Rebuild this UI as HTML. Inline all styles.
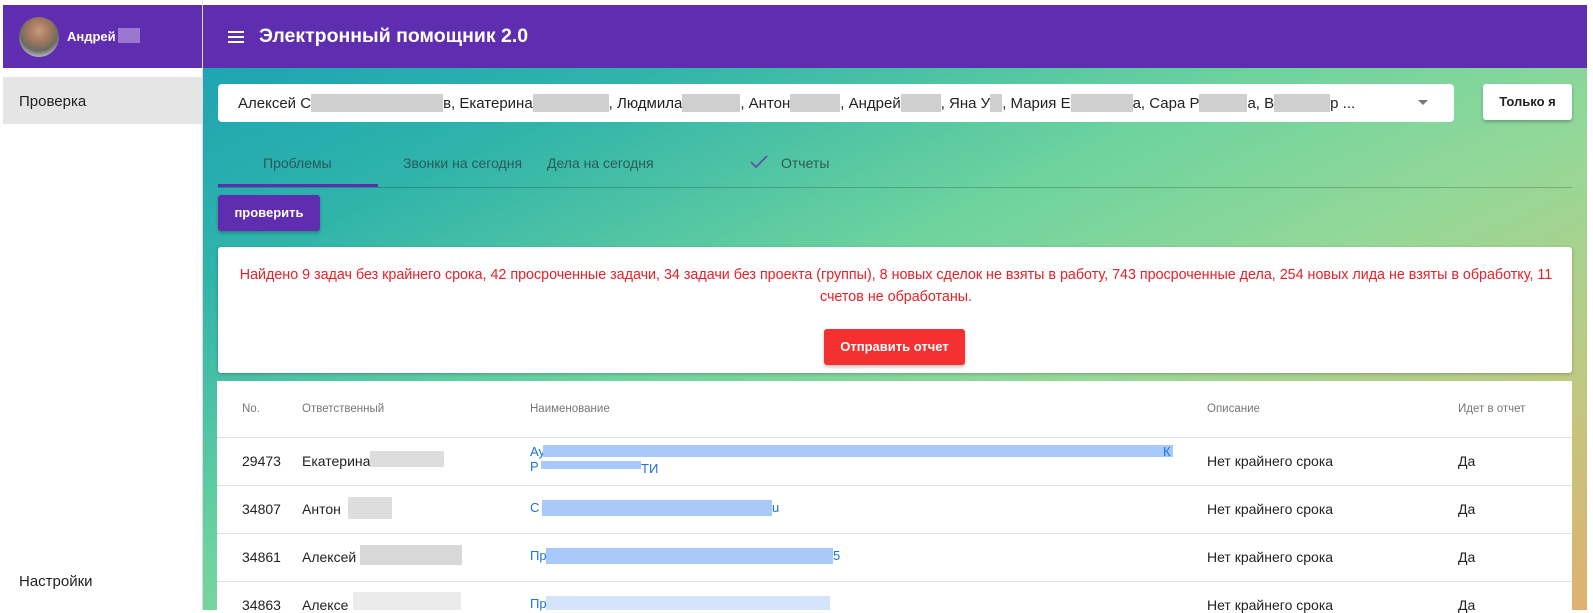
<!DOCTYPE html>
<html><head><meta charset="utf-8"><style>
*{box-sizing:border-box;margin:0;padding:0}
body{width:1593px;height:610px;background:#fff;position:relative;overflow:hidden;font-family:"Liberation Sans","DejaVu Sans",sans-serif;color:#222}
.abs{position:absolute}
.blur{position:absolute;background:#cfcfcf}
.bblur{position:absolute;background:#a9c9fb}
.ib{display:inline-block;height:18px;background:#cfcfcf;vertical-align:-4px}
</style></head><body>
<!-- sidebar -->
<div class="abs" style="left:3px;top:5px;width:199px;height:63px;background:#5e2db0"></div>
<div class="abs" style="left:19px;top:17px;width:40px;height:40px;border-radius:50%;background:radial-gradient(circle at 50% 35%,#c99a80 0,#a87a60 30%,#6b6a60 60%,#b9b8c8 80%)"></div>
<div class="abs" style="left:67px;top:29px;color:#fff;font-weight:bold;font-size:13px">Андрей</div>
<div class="abs" style="left:118px;top:28px;width:22px;height:15px;background:#9a78d0"></div>
<div class="abs" style="left:202px;top:0;width:1px;height:610px;background:#ddd"></div>
<div class="abs" style="left:3px;top:77px;width:199px;height:47px;background:#e5e5e5"></div>
<div class="abs" style="left:19px;top:93px;font-size:15px;color:#222">Проверка</div>
<div class="abs" style="left:19px;top:573px;font-size:15px;color:#222">Настройки</div>
<!-- main -->
<div class="abs" style="left:203px;top:5px;width:1384px;height:605px;background:linear-gradient(155deg,#1a9fb6 0%,#30b4aa 22%,#6ed39e 45%,#94d898 62%,#c0c880 82%,#e0b070 100%)"></div>
<div class="abs" style="left:203px;top:5px;width:1384px;height:63px;background:#5e2db0"></div>
<div class="abs" style="left:228px;top:31px;width:16px;height:2px;background:#fff;box-shadow:0 5px 0 #fff,0 10px 0 #fff"></div>
<div class="abs" style="left:259px;top:25px;color:#fff;font-weight:bold;font-size:19.5px">Электронный помощник 2.0</div>
<!-- select -->
<div class="abs" style="left:218px;top:84px;width:1236px;height:38px;background:#fff;border-radius:4px"></div>
<div class="abs" style="left:238px;top:94px;font-size:15px;white-space:nowrap">Алексей С<span class="ib" style="width:132px"></span>в, Екатерина<span class="ib" style="width:76px"></span>, Людмила<span class="ib" style="width:58px"></span>, Антон<span class="ib" style="width:50px"></span>, Андрей<span class="ib" style="width:40px"></span>, Яна У<span class="ib" style="width:12px"></span>, Мария Е<span class="ib" style="width:62px"></span>а, Сара Р<span class="ib" style="width:48px"></span>а, В<span class="ib" style="width:56px"></span>р ...</div>
<div class="abs" style="left:1418px;top:100px;border-left:5px solid transparent;border-right:5px solid transparent;border-top:5px solid #777"></div>
<div class="abs" style="left:1483px;top:84px;width:89px;height:36px;background:#fff;border-radius:3px;box-shadow:0 2px 3px rgba(0,0,0,.25);font-size:13px;font-weight:bold;text-align:center;line-height:36px">Только я</div>
<!-- tabs -->
<div class="abs" style="left:218px;top:187px;width:1354px;height:1px;background:rgba(0,0,0,.2)"></div>
<div class="abs" style="left:218px;top:184px;width:160px;height:3px;background:#5e2db0"></div>
<div class="abs" style="left:263px;top:155px;font-size:14px;color:#2a5a5a">Проблемы</div>
<div class="abs" style="left:403px;top:155px;font-size:14px;color:#2a5a5a">Звонки на сегодня</div>
<div class="abs" style="left:547px;top:155px;font-size:14px;color:#2a5a5a">Дела на сегодня</div>
<svg class="abs" style="left:749px;top:154px" width="20" height="16" viewBox="0 0 20 16"><path d="M2 8 L7 13 L18 2" fill="none" stroke="#5a55a8" stroke-width="1.8"/></svg>
<div class="abs" style="left:781px;top:155px;font-size:14px;color:#2a5a5a">Отчеты</div>
<div class="abs" style="left:218px;top:195px;width:102px;height:36px;background:#5e2db0;border-radius:3px;box-shadow:0 2px 3px rgba(0,0,0,.25);color:#fff;font-weight:bold;font-size:13px;text-align:center;line-height:36px">проверить</div>
<!-- problem card -->
<div class="abs" style="left:218px;top:247px;width:1354px;height:126px;background:#fff;border-radius:3px;box-shadow:0 1px 3px rgba(0,0,0,.25)"></div>
<div class="abs" style="left:236px;top:264px;width:1320px;text-align:center;font-size:14.3px;line-height:22px;color:#e8202a">Найдено 9 задач без крайнего срока, 42 просроченные задачи, 34 задачи без проекта (группы), 8 новых сделок не взяты в работу, 743 просроченные дела, 254 новых лида не взяты в обработку, 11 счетов не обработаны.</div>
<div class="abs" style="left:824px;top:329px;width:141px;height:36px;background:#f53030;border-radius:3px;box-shadow:0 2px 3px rgba(0,0,0,.25);color:#fff;font-weight:bold;font-size:13px;text-align:center;line-height:36px">Отправить отчет</div>
<!-- table -->
<div class="abs" style="left:217px;top:381px;width:1355px;height:229px;background:#fff"></div>
<div class="abs" style="top:403px;left:242px;font-size:11.5px;color:#777">No.</div>
<div class="abs" style="top:403px;left:302px;font-size:11.5px;color:#777">Ответственный</div>
<div class="abs" style="top:403px;left:530px;font-size:11.5px;color:#777">Наименование</div>
<div class="abs" style="top:403px;left:1207px;font-size:11.5px;color:#777">Описание</div>
<div class="abs" style="top:403px;left:1458px;font-size:11.5px;color:#777">Идет в отчет</div>
<div class="abs" style="left:217px;top:437px;width:1355px;height:1px;background:#e0e0e0"></div>
<div class="abs" style="left:217px;top:485px;width:1355px;height:1px;background:#e0e0e0"></div>
<div class="abs" style="left:217px;top:533px;width:1355px;height:1px;background:#e0e0e0"></div>
<div class="abs" style="left:217px;top:581px;width:1355px;height:1px;background:#e0e0e0"></div>
<div style="font-size:14px">
<div class="abs" style="top:453px;left:242px">29473</div><div class="abs" style="top:453px;left:302px">Екатерина</div><div class="blur" style="top:451px;left:370px;width:74px;height:16px;background:#ddd"></div>
<div class="abs" style="top:444px;left:530px;color:#1a73e8;font-size:13px;line-height:15px">Ау<br>Р</div><div class="bblur" style="top:445px;left:543px;width:630px;height:12px"></div><div class="bblur" style="top:461px;left:541px;width:100px;height:8px"></div><div class="abs" style="top:461px;left:641px;color:#1a73e8;font-size:13px">ТИ</div><div class="abs" style="top:444px;left:1163px;color:#1a73e8;font-size:13px">К</div>
<div class="abs" style="top:453px;left:1207px">Нет крайнего срока</div><div class="abs" style="top:453px;left:1458px">Да</div>
<div class="abs" style="top:501px;left:242px">34807</div><div class="abs" style="top:501px;left:302px">Антон</div><div class="blur" style="top:497px;left:348px;width:44px;height:22px;background:#ddd"></div>
<div class="abs" style="top:500px;left:530px;color:#1a73e8;font-size:13px">С</div><div class="bblur" style="top:500px;left:542px;width:230px;height:16px"></div><div class="abs" style="top:500px;left:772px;color:#1a73e8;font-size:13px">u</div>
<div class="abs" style="top:501px;left:1207px">Нет крайнего срока</div><div class="abs" style="top:501px;left:1458px">Да</div>
<div class="abs" style="top:549px;left:242px">34861</div><div class="abs" style="top:549px;left:302px">Алексей</div><div class="blur" style="top:545px;left:360px;width:102px;height:20px;background:#d8d8d8"></div>
<div class="abs" style="top:548px;left:530px;color:#1a73e8;font-size:13px">Пр</div><div class="bblur" style="top:548px;left:546px;width:287px;height:16px"></div><div class="abs" style="top:548px;left:833px;color:#1a73e8;font-size:13px">5</div>
<div class="abs" style="top:549px;left:1207px">Нет крайнего срока</div><div class="abs" style="top:549px;left:1458px">Да</div>
<div class="abs" style="top:597px;left:242px">34863</div><div class="abs" style="top:597px;left:302px">Алексе</div><div class="blur" style="top:592px;left:353px;width:108px;height:18px;background:#ebebeb"></div>
<div class="abs" style="top:596px;left:530px;color:#1a73e8;font-size:13px">Пр</div><div class="bblur" style="top:596px;left:546px;width:284px;height:14px;background:#d5e4fb"></div>
<div class="abs" style="top:597px;left:1207px">Нет крайнего срока</div><div class="abs" style="top:597px;left:1458px">Да</div>
</div>
</body></html>
